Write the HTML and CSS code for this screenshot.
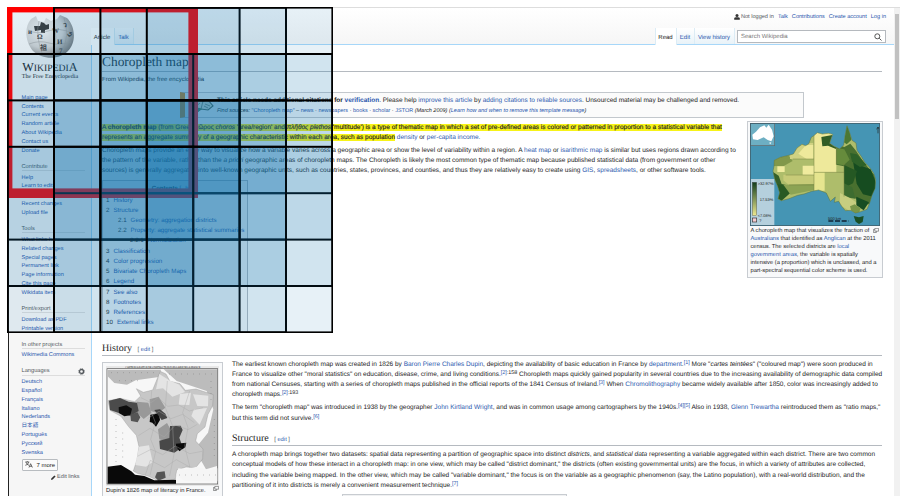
FILE: index.html
```html
<!DOCTYPE html>
<html lang="en">
<head>
<meta charset="utf-8">
<title>Choropleth map - Wikipedia</title>
<link rel="stylesheet" href="styles.css">
</head>
<body>
<div class="window">
<div class="page">
<aside class="sidebar">
  <a class="logo">
    <svg class="globe" width="48" height="44" viewBox="0 0 48 44">
      <defs><radialGradient id="g" cx=".35" cy=".35" r=".75"><stop offset="0" stop-color="#f4f4f4"/><stop offset=".55" stop-color="#d2d2d2"/><stop offset="1" stop-color="#6e6e6e"/></radialGradient></defs>
      <path d="M5 4 10 1 12 6 18 7 20 3 25 6 31 4 34 0 41 3C50 12 50 28 42 36 34 45 16 45 7 36-1 27-2 12 5 4Z" fill="url(#g)"/>
      <path d="M8 11h6l1-4 3 1 2 2 3-1v5l-4 1v3h-4v-3l-6 1Z" fill="#3c3c3c"/>
      <g fill="none" stroke="#999" stroke-width=".5"><path d="M2 15q9 5 20 1t24 2M3 29q10-4 20-1t22-1M13 6q-4 15 4 35M27 5q6 16-1 37M38 3q6 18-2 34"/></g>
      <g class="glyphs"><text x="11" y="24">Ω</text><text x="26" y="18">W</text><text x="31" y="29">И</text><text x="14" y="35">祖</text><text x="33" y="38">7</text><text x="37" y="12">ว</text><text x="2" y="19">и</text><text x="41" y="20">ي</text></g>
    </svg>
    <span class="wordmark">W<small>IKIPEDI</small>A</span>
    <span class="tagline">The Free Encyclopedia</span>
  </a>
  <ul class="main"><li>Main page</li><li>Contents</li><li>Current events</li><li>Random article</li><li>About Wikipedia</li><li>Contact us</li><li>Donate</li></ul>
  <h3>Contribute</h3>
  <ul><li>Help</li><li>Learn to edit</li><li>Community portal</li><li>Recent changes</li><li>Upload file</li></ul>
  <h3>Tools</h3>
  <ul><li>What links here</li><li>Related changes</li><li>Special pages</li><li>Permanent link</li><li>Page information</li><li>Cite this page</li><li>Wikidata item</li></ul>
  <h3>Print/export</h3>
  <ul><li>Download as PDF</li><li>Printable version</li></ul>
  <h3>In other projects</h3>
  <ul><li>Wikimedia Commons</li></ul>
  <h3 class="lang">Languages <svg width="7" height="7" viewBox="0 0 7 7"><circle cx="3.5" cy="3.5" r="2" fill="none" stroke="#54595d" stroke-width="1.3"/><circle cx="3.5" cy="3.5" r="2.9" fill="none" stroke="#54595d" stroke-width=".8" stroke-dasharray="1.15 1.13"/></svg></h3>
  <ul><li>Deutsch</li><li>Español</li><li>Français</li><li>Italiano</li><li>Nederlands</li><li>日本語</li><li>Português</li><li>Русский</li><li>Svenska</li></ul>
  <button class="more"><svg width="8" height="7" viewBox="0 0 8 7" fill="none" stroke="#333" stroke-width=".7"><path d="M.3 1h4M2.3.2V1M1 1.2Q2 4 4 4.3M3.7 1.2Q3 4 .3 4.3M4 6.5 5.6 2.7 7.4 6.5M4.6 5.3h2.2"/></svg>7 more</button>
  <div class="editlinks"><svg width="5" height="5" viewBox="0 0 5 5"><path d="M0 5 .5 3.3 3.4.4 4.6 1.6 1.7 4.5Z" fill="#333"/></svg>Edit links</div>
</aside>
<div class="body">
  <header>
    <nav class="personal"><svg width="6" height="6" viewBox="0 0 6 6"><circle cx="3" cy="1.6" r="1.5" fill="#333"/><path d="M.2 5.8V4.4Q.3 3.3 2 3.2h2Q5.7 3.3 5.8 4.4V5.8Z" fill="#333"/></svg><span>Not logged in</span><a>Talk</a><a>Contributions</a><a>Create account</a><a>Log in</a></nav>
    <div class="tabs">
      <span class="tab on art">Article</span><a class="tab talk">Talk</a>
      <span class="gap"></span>
      <span class="tab on read">Read</span><a class="tab edit">Edit</a><a class="tab hist">View history</a>
      <div class="search">Search Wikipedia<svg width="8" height="8" viewBox="0 0 8 8" fill="none" stroke="#444" stroke-width=".9"><circle cx="3.3" cy="3.3" r="2.5"/><path d="m5.2 5.2 2.3 2.3"/></svg></div>
    </div>
  </header>
  <main>
    <h1>Choropleth map</h1>
    <div class="sub">From Wikipedia, the free encyclopedia</div>
    <div class="ambox">
      <svg width="23" height="19" viewBox="0 0 23 19"><path d="M1 11 6 3l6 2 5-1 5 6-5 4-7-1-5 4Z" fill="#ece8cc" stroke="#4e5a3e" stroke-width="1.1"/><path d="m12 5-2 8M4 11l5-4M14 8l5 2M13 10l4 2" stroke="#6b7558" stroke-width=".8"/><path d="m1 11 4 6 6-4-2-1Z" fill="#47804a"/></svg>
      <div><p class="l1"><b>This article needs additional citations for <a>verification</a></b>. Please help <a>improve this article</a> by <a>adding citations to reliable sources</a>. Unsourced material may be challenged and removed.</p>
      <p class="l2"><i>Find sources:</i> <a>"Choropleth map"</a> – <a>news</a> · <a>newspapers</a> · <a>books</a> · <a>scholar</a> · <a>JSTOR</a> <i>(March 2009)</i> <i>(<a>Learn how and when to remove this template message</a>)</i></p></div>
    </div>
    <div class="intro">
      <div class="left">
        <p><mark>A <b>choropleth map</b> (from Greek χῶρος <i>choros</i> 'area/region' and <i>πλῆθος plethos</i> 'multitude') is a type of thematic map in which a set of pre-defined areas is colored or patterned in proportion to a statistical variable that</mark><br><mark>represents an aggregate summary of a geographic characteristic within each area, such as population</mark> <a>density</a> or <a>per-capita income.</a></p>
        <p>Choropleth maps provide an easy way to visualize how a variable varies across a geographic area or show the level of variability within a region. A <a>heat map</a> or <a>isarithmic map</a> is similar but uses regions drawn according to<br>the pattern of the variable, rather than the <i>a priori</i> geographic areas of choropleth maps. The Choropleth is likely the most common type of thematic map because published statistical data (from government or other<br>sources) is generally aggregated into well-known geographic units, such as countries, states, provinces, and counties, and thus they are relatively easy to create using <a>GIS</a>, <a>spreadsheets</a>, or other software tools.</p>
        <div class="toc"><div class="toch"><b>Contents</b> [<a>hide</a>]</div>
          <ol><li>1<a>History</a></li><li>2<a>Structure</a></li><li class="s">2.1<a>Geometry: aggregation districts</a></li><li class="s">2.2<a>Property: aggregate statistical summaries</a></li><li class="ss">2.2.1<a>Normalization</a></li><li>3<a>Classification</a></li><li>4<a>Color progression</a></li><li>5<a>Bivariate Choropleth Maps</a></li><li>6<a>Legend</a></li><li>7<a>See also</a></li><li>8<a>Footnotes</a></li><li>9<a>References</a></li><li>10<a>External links</a></li></ol></div>
      </div>
      <figure class="aus">
        <svg width="130" height="103" viewBox="0 0 390 309">
          <rect width="390" height="309" fill="#4595b4"/>
          <rect x="1" y="1" width="73" height="67" fill="#6dafc3" stroke="#666" stroke-width="2"/>
          <path d="M7 35 18 26 30 13 43 7 49 14 56 5 66 20 71 40 64 55 53 51 41 43 23 51 9 49Z" fill="#fff"/><path d="m57 59 7-1-3 6Z" fill="#fff"/>
          <clipPath id="au"><path id="aup" d="M73 112 91 103 112 98 130 93 141 75 156 64 167 68 176 63 184 43 193 37 202 29 217 33 235 31 248 34 243 48 239 61 252 70 269 78 281 66 285 39 291 8 299 29 306 52 318 60 321 82 335 102 344 118 358 132 371 151 377 170 375 196 366 216 359 240 351 259 332 266 316 270 303 262 286 263 276 251 266 235 253 238 256 222 241 235 229 210 206 201 185 205 162 213 143 217 117 227 94 233 84 228 89 209 83 190 74 169 69 144 72 129Z"/></clipPath>
          <g clip-path="url(#au)"><path d="M60 0h330v309H60Z" fill="#aebd6b"/>
            <path d="M60 90 110 90 128 114 100 130 60 129Z" fill="#81984a"/><path d="M120 60h70v48h-70Z" fill="#d0d282"/><path d="M145 92 168 66l22 0v42h-20Z" fill="#eee99b"/><path d="M192 20h67v128h-67Z" fill="#eee99b"/><path d="M158 128h34v28h-34Z" fill="#f0eb9e"/><path d="M192 148h32v55h-32Z" fill="#e6e58f"/><path d="M82 130h22v17H82Z" fill="#f0eb9e"/><path d="m100 155 92 1v27l-75 3-17-14Z" fill="#c7cb78"/>
            <path d="M214 42 247 36 262 64 258 78 234 68 217 70Z" fill="#315d25"/>
            <path d="M259 64 283 72 301 62 318 83 341 117 374 157 380 208 360 244 331 243 316 226 282 219 282 130 259 125Z" fill="#49702f"/>
            <path d="m260 76 23 3 16 31-18 17-21-4Z" fill="#668b3c"/><path d="m309 115 20 12 33 12 18 45-8 38-33-8-19-32Z" fill="#164c20"/><path d="m282 126 39 18-12 37-27 14Z" fill="#255823"/><path d="m282 181 25 12 9 34-34-5Z" fill="#3d6c30"/><path d="m300 90 20 4 30 32-20 6-24-16Z" fill="#2d6128"/><path d="m270 210 28 14 37 24-25 23-41-26Z" fill="#c7ce80"/><path d="m319 221 38 17-16 24-22-15Z" fill="#174d22"/><path d="m300 250 14-6 18 12-6 16h-20Z" fill="#799749"/><path d="M81 180 112 187 120 211 94 234 78 222Z" fill="#285923"/><path d="m66 145 20 13 10 28-18-3Z" fill="#345f29"/><path d="m100 185 92-2v18l-70 14Z" fill="#8ca354"/><path d="m288 10 9 1 7 40-14 13-8-6Z" fill="#4b7833"/>
            <path d="M192 20v188M192 148h90M259 60v65M282 120v101M128 108h64M107 156h85M117 186h75" fill="none" stroke="#748043" stroke-width="1.5"/>
          </g><use href="#aup" fill="none" stroke="#597343" stroke-width="1.5"/>
          <path d="m311 279 16 4 14-4-3 18-11 6-10-7Z" fill="#1a4f25"/>
          <defs><linearGradient id="lg" x2="0" y2="1"><stop stop-color="#113e1b"/><stop offset="1" stop-color="#eee98f"/></linearGradient></defs>
          <path d="M2 168h71v139H2Z" fill="#b5d0dd"/><rect x="7" y="178" width="13" height="100" fill="url(#lg)" stroke="#333"/><rect x="7" y="285" width="13" height="12" fill="#f7ccd0" stroke="#333" stroke-width="2"/>
          <g class="leg"><text x="23" y="185">&gt;32.97%</text><text x="29" y="234">17.53%</text><text x="23" y="282">&lt;7.08%</text><text x="28" y="297">?</text></g>
          <path d="M235 294h61" stroke="#123" stroke-width="4" stroke-dasharray="15 5"/><g class="leg"><text x="234" y="290">500 km</text></g><path d="m384 13 0 18m-4-12 4-7 4 7" stroke="#222" stroke-width="2" fill="none"/>
          <rect x="1" y="1" width="388" height="307" fill="none" stroke="#41616f" stroke-width="3"/>
        </svg>
        <figcaption><svg class="mag" width="6" height="5" viewBox="0 0 6 5"><path d="M1.8.4h3.8v2.8H1.8ZM1.8 1.5H.4v3h3V3.2" fill="none" stroke="#555" stroke-width=".6"/></svg>A choropleth map that visualizes the fraction of<br><a>Australians</a> that identified as <a>Anglican</a> at the 2011<br>census. The selected districts are <a>local</a><br><a>government areas</a>, the variable is spatially<br>intensive (a proportion) which is unclassed, and a<br>part-spectral sequential color scheme is used.</figcaption>
      </figure>
    </div>
    <h2 class="h-history">History <small>[ <a>edit</a> ]</small></h2>
    <div class="cols">
      <figure class="dupin">
        <svg width="113" height="120" viewBox="0 0 339 360">
          <rect width="339" height="360" fill="#e8e8e8"/><rect x="3" y="8" width="332" height="346" fill="#f7f7f7" stroke="#555" stroke-width="2"/>
          <text class="maptitle" x="58" y="6" textLength="225">CARTE FIGURATIVE DE L'INSTRUCTION POPULAIRE DE LA FRANCE</text>
          <path d="M5 11h160l-6 22-70 10-26 13-38-5-20-20Z" fill="#bbb"/><path d="M173 10h160v290l-33 10-34-60 40-50 16-70-20-55-90-30Z" fill="#bcbcbc"/>
          <path d="M163 16 180 24 192 46 222 53 238 73 270 69 322 86 320 119 306 145 297 183 274 203 269 225 291 249 290 279 269 305 240 303 212 312 208 339 184 345 154 343 126 330 94 322 82 315 93 281 99 242 91 208 67 181 45 151 12 133 6 104 43 97 86 107 104 90 91 68 112 79 140 72 150 47Z" fill="#c7c7c7" stroke="#888"/>
          <path d="M160 24 190 43 220 56 237 78 199 92 171 67 150 70Z M222 84 255 80 250 117 218 116Z M261 85 307 89 306 121 274 120Z M99 242 129 238 140 288 120 302 88 297Z M264 130 303 126 281 176 256 150Z" fill="#e4e4e4"/>
          <path d="m93 107 34 3 9 31-23 18-19-18ZM131 100l27-8 20 33-22 17-24-8ZM156 190l27-19 18 33-16 24-25-8Z" fill="#999"/>
          <path d="M9 104 42 96 68 107 93 110 98 135 75 149 45 143 12 132Z" fill="#4b4b4b"/><path d="m38 124 23-6 17 10-5 20-18 3-16-10Z" fill="#0d0d0d"/><path d="m73 146 21-8 9 16-8 15-20-4Z" fill="#555"/>
          <path d="m133 146 26-5 3 21-12 20-11-12-8-2Z" fill="#080808"/><path d="m145 132 17-2 16 13 6 13-17 6-11-15Z" fill="#444"/>
          <path d="M192 180 224 179 230 192 220 215 230 243 205 260 162 249 160 224 190 216Z" fill="#484848"/><path d="m210 233 31-3-3 14-18 12-10-15Z" fill="#090909"/><path d="m153 319 23-3 3 19-22 9-10-10Z" fill="#555"/>
          <path d="M5 302 45 297 76 316 87 326 115 330 145 343 210 341 210 353H5Z" fill="#090909"/>
          <path d="m211 328 6-21 25 3 30-8 41 11 21-6v39h-95Z" fill="#f5f5f5"/>
          <g fill="none" stroke="#aaa" stroke-width="1.2"><path d="M105 95l30 15 22-15 28 26 34-4 31 18 41-10M124 158l35-22 36 22 35-13 35 25M97 209l35-22 42 26 34-36 38 14 28-16M94 271l41-21 35 16 38-26 43 23 37-7M118 327l15-44 43 22 35-24 40 22M137 74l-4 57 15 38-14 51 15 37-17 71M184 45l-6 80 22 55 4 85-13 65M251 75l-21 65 16 45-10 55 16 65"/></g>
          <g class="dots"><path d="M15 20h140M40 44h70M190 24h140M315 45v60M325 160v120M30 160v140M50 200v90M220 327h110"/></g>
        </svg>
        <figcaption>Dupin's 1826 map of literacy in France. <svg class="mag" width="6" height="5" viewBox="0 0 6 5"><path d="M1.8.4h3.8v2.8H1.8ZM1.8 1.5H.4v3h3V3.2" fill="none" stroke="#555" stroke-width=".6"/></svg></figcaption>
      </figure>
      <section>
        <p>The earliest known choropleth map was created in 1826 by <a>Baron Pierre Charles Dupin</a>, depicting the availability of basic education in France by <a>department</a>.<sup><a>[1]</a></sup> More "<i>cartes teintées</i>" ("coloured map") were soon produced in<br>France to visualize other "moral statistics" on education, disease, crime, and living conditions.<sup><a>[2]</a>:158</sup> Choropleth maps quickly gained popularity in several countries due to the increasing availability of demographic data compiled<br>from national Censuses, starting with a series of choropleth maps published in the official reports of the 1841 Census of Ireland.<sup><a>[3]</a></sup> When <a>Chromolithography</a> became widely available after 1850, color was increasingly added to<br>choropleth maps.<sup><a>[2]</a>:193</sup></p>
        <p>The term "choropleth map" was introduced in 1938 by the geographer <a>John Kirtland Wright</a>, and was in common usage among cartographers by the 1940s.<sup><a>[4][5]</a></sup> Also in 1938, <a>Glenn Trewartha</a> reintroduced them as "ratio maps,"<br>but this term did not survive.<sup><a>[6]</a></sup></p>
        <h2 class="h-structure">Structure <small>[ <a>edit</a> ]</small></h2>
        <p>A choropleth map brings together two datasets: spatial data representing a partition of geographic space into distinct <i>districts</i>, and <i>statistical data</i> representing a variable aggregated within each district. There are two common<br>conceptual models of how these interact in a choropleth map: in one view, which may be called "district dominant," the districts (often existing governmental units) are the focus, in which a variety of attributes are collected,<br>including the variable being mapped. In the other view, which may be called "variable dominant," the focus is on the variable as a geographic phenomenon (say, the Latino population), with a real-world distribution, and the<br>partitioning of it into districts is merely a convenient measurement technique.<sup><a>[7]</a></sup></p>
        <div class="next"></div>
      </section>
    </div>
  </main>
</div>
<div class="scroll"><div class="thumb"></div></div>
</div>
</div>
<svg class="overlay" width="326" height="326" viewBox="7 7 326 326">
  <g class="win">
    <rect class="first" x="7.6" y="7.6" width="185.6" height="185.6"/>
    <rect x="54" y="7.6" width="185.6" height="185.6"/>
    <rect x="100.4" y="7.6" width="185.6" height="185.6"/>
    <rect x="146.8" y="7.6" width="185.6" height="185.6"/>
    <rect x="7.6" y="54" width="185.6" height="185.6"/>
    <rect x="54" y="54" width="185.6" height="185.6"/>
    <rect x="100.4" y="54" width="185.6" height="185.6"/>
    <rect x="146.8" y="54" width="185.6" height="185.6"/>
    <rect x="7.6" y="100.4" width="185.6" height="185.6"/>
    <rect x="54" y="100.4" width="185.6" height="185.6"/>
    <rect x="100.4" y="100.4" width="185.6" height="185.6"/>
    <rect x="146.8" y="100.4" width="185.6" height="185.6"/>
    <rect x="7.6" y="146.8" width="185.6" height="185.6"/>
    <rect x="54" y="146.8" width="185.6" height="185.6"/>
    <rect x="100.4" y="146.8" width="185.6" height="185.6"/>
    <rect x="146.8" y="146.8" width="185.6" height="185.6"/>
  </g>
</svg>
</body>
</html>
```
FILE: styles.css
```css
* { box-sizing: border-box; }
body { margin: 0; width: 907px; height: 503px; overflow: hidden; position: relative; background: #fff; color: #222; font: 6.5px/10.22px "Liberation Sans", "Noto Sans CJK JP", sans-serif; text-rendering: geometricPrecision; }
h1, h2, h3, p, ul, ol, figure { margin: 0; padding: 0; font-weight: normal; list-style: none; }
p { white-space: nowrap; }
a { color: #2a58ae; }
svg { display: block; flex: none; }
.window { margin: 7px 0 0 7.5px; width: 892px; height: 489px; overflow: hidden; border-top: 1px solid #ddd; border-left: 1px solid #222; }
.page { display: flex; height: 489px; background: #f6f6f6; }
.sidebar { width: 82px; flex: none; padding-left: 13px; font-size: 5.6px; line-height: 8.87px; white-space: nowrap; background: linear-gradient(#fff, #f6f6f6 45px); }
.sidebar li { height: 8.87px; color: #2a58ae; }
.logo { display: flex; flex-direction: column; align-items: center; width: 57px; height: 85.7px; padding-top: 7px; color: #222; }
.glyphs { font: bold 7px "Liberation Serif", "Noto Sans CJK JP", serif; fill: #444; }
.wordmark { font: 12.2px/13px "Liberation Serif", serif; margin-top: 2px; }
.wordmark small { font-size: 9.7px; }
.tagline { font: 6.1px/5px "Liberation Serif", serif; }
.sidebar h3 { height: 8px; font-size: 5.7px; line-height: 8px; margin: 7.6px 6px 2.3px 0; color: #54595d; border-bottom: .5px solid #ddd; }
.lang { display: flex; justify-content: space-between; align-items: center; }
.more { display: flex; align-items: center; gap: 4px; width: 36px; height: 12px; padding: 0 2px; margin-top: 1px; border: 1px solid #b8bcc0; background: #fbfbfb; color: #222; font: 6px "Liberation Sans", sans-serif; border-radius: 1px; white-space: nowrap; }
.editlinks { display: flex; gap: 1px; align-items: center; justify-content: flex-end; padding-right: 11px; margin-top: 2.5px; color: #54595d; }
.body { flex: 1; min-width: 0; }
header { height: 36px; background: linear-gradient(#fff, #f6f6f6); }
.personal { display: flex; justify-content: flex-end; gap: 4px; height: 20px; padding: 5.5px 7.5px 0 0; font-size: 5.6px; line-height: 6.5px; white-space: nowrap; color: #54595d; }
.personal span { margin-left: -3px; }
.tabs { display: flex; height: 16px; font-size: 6px; line-height: 20px; white-space: nowrap; padding-right: 7.5px; }
.tab { border-right: 1px solid #dcecf5; text-align: center; background: linear-gradient(#fff, #e8f2f8); height: 16px; }
.tab.on { background: #fff; height: 17px; }
.art { width: 24px; }
.talk { width: 19px; }
.read { width: 22px; border-left: 1px solid #dcecf5; }
.edit { width: 18px; }
.hist { width: 40px; }
.gap { flex: 1; }
.search { display: flex; justify-content: space-between; align-items: center; margin: 2px 0 0 2.5px; padding: 0 3px; width: 149px; height: 13px; border: 1px solid #b5b9be; background: #fff; color: #777; line-height: 10px; }
main { height: 453px; background: #fff; border: 1px solid #a7d7f9; border-width: 1px 0 0 1px; padding: 9px 11.5px 0 10.5px; overflow: hidden; }
h1 { font: 13.4px/16.5px "Liberation Serif", serif; height: 18px; border-bottom: 1px solid #b5bac0; }
.sub { font-size: 6px; line-height: 8px; margin-top: 4px; }
.ambox { display: flex; width: 624px; height: 26px; margin: 8px 0 0 78px; border: 1px solid #c3c8cd; border-left: 5px solid #f28500; background: #fbfbfb; }
.ambox svg { margin: 3px 3px 0 6px; }
.l1 { margin-top: 2.5px; font-size: 6.47px; }
.l2 { font-size: 5.5px; }
.intro { display: flex; justify-content: space-between; height: 222px; margin-top: 3px; }
.left { width: 622px; flex: none; padding-top: 1px; }
.left p { margin-bottom: 3px; }
.left p:first-child { padding-top: .5px; }
mark { background: #f7f318; color: #222; -webkit-text-stroke: .15px #222; }
.toc { width: 146px; height: 153px; border: 1px solid #b5bac0; background: #f8f9fa; margin-top: 1px; padding: 3px 3px; font-size: 6.2px; }
.toch { text-align: center; height: 12px; line-height: 11px; font-size: 6px; }
.toc li { height: 10.22px; line-height: 10.22px; white-space: nowrap; }
.toc a { margin-left: 4px; }
.toc .s { padding-left: 12px; }
.toc .ss { padding-left: 24px; }
figure { border: 1px solid #c8ccd1; background: #f8f9fa; }
.aus { width: 136px; height: 157px; padding: 1px 2px; margin-right: -1.2px; flex: none; }
.aus figcaption { font-size: 5.75px; line-height: 7.95px; padding: 2px 0 0 .3px; white-space: nowrap; }
.aus .mag { float: right; margin: 0 1px 0 0; }
.leg { font: 12px "Liberation Sans", sans-serif; fill: #222; }
h2 { font: 10px/12px "Liberation Serif", serif; border-bottom: 1px solid #b5bac0; }
h2 small { font: 5.8px "Liberation Sans", sans-serif; color: #54595d; margin-left: 3px; }
.h-history { height: 13px; }
.cols { display: flex; gap: 9px; margin-top: 3.5px; }
.dupin { width: 121px; height: 140px; padding: 3px; margin-top: 2px; flex: none; }
.dupin figcaption { display: flex; justify-content: space-between; font-size: 5.75px; line-height: 10px; white-space: nowrap; }
.maptitle { font: 8px "Liberation Serif", serif; }
.dots { fill: none; stroke: #777; stroke-width: 2; stroke-dasharray: 2 16; }
section { flex: 1; min-width: 0; }
section p { margin-bottom: 3px; }
sup { font-size: 5.4px; line-height: 0; vertical-align: 2.3px; }
.h-structure { height: 13px; margin: 9.3px 0 4px; }
.next { width: 225px; height: 5px; margin: 2px 0 0 110px; background: #f0f1f2; border: 1px solid #c8ccd1; }
.scroll { flex: none; width: 6px; background: #f1f1f1; padding: 6px 1px; }
.thumb { height: 105px; background: #c1c1c1; }
.overlay { position: absolute; left: 7px; top: 7px; }
.win rect { fill: rgba(20, 115, 178, .1); stroke: #000; stroke-width: 2; }
.win .first { stroke: #f00; stroke-width: 9.6; }
```
